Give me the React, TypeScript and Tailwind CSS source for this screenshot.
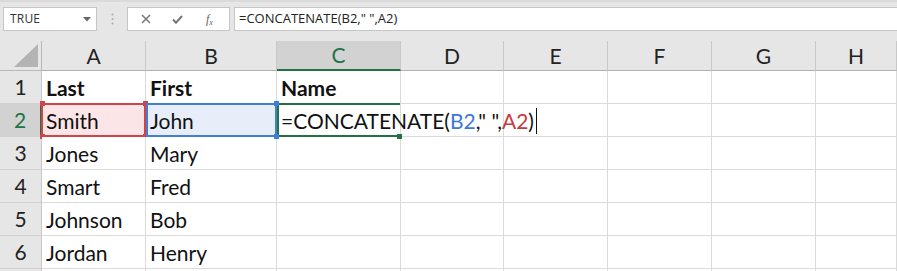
import React from "react";

const cols = ["A", "B", "C", "D", "E", "F", "G", "H"];
const data: string[][] = [
  ["Last", "First", "Name"],
  ["Smith", "John", ""],
  ["Jones", "Mary", ""],
  ["Smart", "Fred", ""],
  ["Johnson", "Bob", ""],
  ["Jordan", "Henry", ""],
];

const font = { fontFamily: "Lato, 'Open Sans', sans-serif" };

function Square({ className }: { className: string }) {
  return <div className={"absolute w-[5px] h-[5px] " + className} />;
}

export default function App() {
  return (
    <div className="w-[897px] h-[271px] overflow-hidden bg-white select-none" style={font}>
      {/* toolbar */}
      <div className="h-[41px] bg-[#e6e6e6] border-t-2 border-[#dadada] flex items-start pt-[5px]">
        <div className="ml-[3px] w-[94px] h-[24px] bg-white border border-[#c6c6c6] flex items-center pl-[6px] pr-[5px] justify-between">
          <span className="text-[12px] text-[#333] tracking-[0.2px]" style={{ fontFamily: "'Open Sans', sans-serif" }}>TRUE</span>
          <svg width="8" height="5" viewBox="0 0 8 5"><path d="M0 0h8L4 4.5z" fill="#666" /></svg>
        </div>
        <div className="w-[30px] h-[24px] flex items-center justify-center">
          <svg width="3" height="12" viewBox="0 0 3 12">
            <circle cx="1.5" cy="1.5" r="1" fill="#aaa" />
            <circle cx="1.5" cy="6" r="1" fill="#aaa" />
            <circle cx="1.5" cy="10.5" r="1" fill="#aaa" />
          </svg>
        </div>
        <div className="w-[103px] h-[24px] bg-white border border-[#c6c6c6] flex items-center">
          <svg className="ml-[13px]" width="10" height="10" viewBox="0 0 10 10">
            <path d="M1 1l8 8M9 1l-8 8" stroke="#777" strokeWidth="1.5" />
          </svg>
          <svg className="ml-[21px]" width="11" height="9" viewBox="0 0 11 9">
            <path d="M1 4.5l3 3.2L10 1" stroke="#777" strokeWidth="2" fill="none" />
          </svg>
          <span className="ml-[23px] text-[12px] italic text-[#666]" style={{ fontFamily: "'Liberation Serif', serif" }}>
            f<sub className="text-[8px]">x</sub>
          </span>
        </div>
        <div className="ml-[4px] flex-1 h-[24px] bg-white border border-[#c6c6c6] border-r-0 flex items-center pl-[4px]">
          <span className="text-[13px] text-[#222]" style={{ fontFamily: "'Open Sans', sans-serif" }}>=CONCATENATE(B2," ",A2)</span>
        </div>
      </div>

      {/* grid */}
      <div className="grid grid-cols-[42px_104px_131px_124px_103px_104px_104px_104px_1fr] grid-rows-[30px_33px_33px_33px_33px_33px_33px_33px]">
        {/* corner */}
        <div className="bg-[#e6e6e6] border-r border-b border-[#b8b8b8] relative">
          <svg className="absolute right-[3px] bottom-[3px]" width="24" height="23" viewBox="0 0 24 23">
            <path d="M24 0V23H0z" fill="#b4b4b4" />
          </svg>
        </div>
        {cols.map((c) => {
          const sel = c === "C";
          return (
            <div
              key={c}
              className={
                "flex items-center justify-center text-[21px] border-r border-[#c8c8c8] " +
                (sel
                  ? "bg-[#d2d2d2] text-[#217346] border-b-2 border-b-[#217346]"
                  : "bg-[#e6e6e6] text-[#222] border-b border-b-[#b0b0b0]")
              }
            >
              {c}
            </div>
          );
        })}

        {Array.from({ length: 7 }).map((_, r) => {
          const rowNum = r + 1;
          const row = data[r] || [];
          const selRow = rowNum === 2;
          return (
            <React.Fragment key={r}>
              <div
                className={
                  "flex items-center justify-center text-[21px] border-b border-[#d0d0d0] " +
                  (selRow
                    ? "bg-[#d2d2d2] text-[#217346] border-r-2 border-r-[#217346]"
                    : "bg-[#e6e6e6] text-[#222] border-r border-r-[#c8c8c8]")
                }
              >
                {rowNum <= 6 ? rowNum : ""}
              </div>
              {cols.map((c, ci) => {
                const val = row[ci] || "";
                const bold = rowNum === 1;
                const isA2 = selRow && ci === 0;
                const isB2 = selRow && ci === 1;
                const isC2 = selRow && ci === 2;
                let bg = "bg-white";
                if (isA2) bg = "bg-[#fbe5e6]";
                if (isB2) bg = "bg-[#e7eef9]";
                return (
                  <div
                    key={c}
                    className={
                      "relative flex items-center pl-[4px] pt-[1px] text-[21px] text-[#111] whitespace-nowrap border-r border-b border-[#dadada] " +
                      bg +
                      (bold ? " font-bold" : "") +
                      (isC2 ? " z-10 overflow-visible" : "")
                    }
                  >
                    {isA2 && (
                      <>
                        <div className="absolute -left-[1px] -top-[1px] -right-[1px] -bottom-[1px] border-2 border-[#d0434b]" />
                        <Square className="bg-[#d0434b] -left-[2px] -top-[3px]" />
                        <Square className="bg-[#d0434b] -right-[3px] -top-[3px]" />
                        <Square className="bg-[#d0434b] -left-[2px] -bottom-[3px]" />
                        <Square className="bg-[#d0434b] -right-[3px] -bottom-[3px]" />
                      </>
                    )}
                    {isB2 && (
                      <>
                        <div className="absolute left-[0px] -top-[1px] -right-[1px] -bottom-[1px] border-2 border-[#3f7fd6]" />
                        <Square className="bg-[#3f7fd6] -right-[3px] -top-[3px] z-20" />
                        <Square className="bg-[#3f7fd6] -right-[3px] -bottom-[3px] z-20" />
                      </>
                    )}
                    {isC2 && (
                      <>
                        <div className="absolute left-[0px] -top-[1px] right-0 -bottom-[1px] border-2 border-r-0 border-[#217346]" />
                        <Square className="bg-[#217346] -right-[2px] -bottom-[3px]" />
                      </>
                    )}
                    {isC2 ? (
                      <span className="relative z-10 flex items-center">
                        <span>=CONCATENATE(</span>
                        <span className="text-[#3c78d8]">B2</span>
                        <span>," ",</span>
                        <span className="text-[#c8383f]">A2</span>
                        <span>)</span>
                        <span className="ml-[2px] inline-block w-[1.5px] h-[26px] bg-[#111]" />
                      </span>
                    ) : (
                      <span className="relative">{val}</span>
                    )}
                  </div>
                );
              })}
            </React.Fragment>
          );
        })}
      </div>
    </div>
  );
}
